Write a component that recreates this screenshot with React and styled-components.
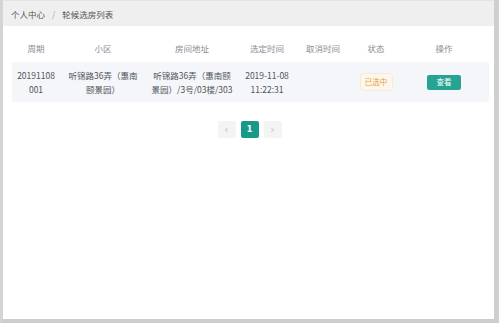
import styled, { createGlobalStyle } from "styled-components";

const GlobalStyle = createGlobalStyle`
  html, body {
    margin: 0;
    padding: 0;
    background: #fff;
  }
  body {
    font-family: "Noto Sans CJK SC", "Noto Sans", sans-serif;
  }
`;

const rows = [
  {
    period: ["20191108", "001"],
    estate: ["听锦路36弄（惠南", "颐景园）"],
    address: ["听锦路36弄（惠南颐", "景园）/3号/03楼/303"],
    chosen: ["2019-11-08", "11:22:31"],
    cancelled: [],
    status: "已选中",
  },
];

const columns = ["周期", "小区", "房间地址", "选定时间", "取消时间", "状态", "操作"];

const App = () => {
  return (
    <>
      <GlobalStyle />
      <Frame>
        <Breadcrumb>
          <span>个人中心</span>
          <Sep>/</Sep>
          <span>轮候选房列表</span>
        </Breadcrumb>
        <Content>
          <Table>
            <HeadRow>
              {columns.map((c) => (
                <HeadCell key={c}>{c}</HeadCell>
              ))}
            </HeadRow>
            {rows.map((r, i) => (
              <BodyRow key={i}>
                <Cell>{r.period.map((l) => <div key={l}>{l}</div>)}</Cell>
                <Cell>{r.estate.map((l) => <div key={l}>{l}</div>)}</Cell>
                <Cell>{r.address.map((l) => <div key={l}>{l}</div>)}</Cell>
                <Cell>{r.chosen.map((l) => <div key={l}>{l}</div>)}</Cell>
                <Cell>{r.cancelled.map((l) => <div key={l}>{l}</div>)}</Cell>
                <Cell>
                  <Tag>{r.status}</Tag>
                </Cell>
                <Cell>
                  <ViewButton>查看</ViewButton>
                </Cell>
              </BodyRow>
            ))}
          </Table>
          <Pager>
            <PageBtn $disabled>‹</PageBtn>
            <PageBtn $active>1</PageBtn>
            <PageBtn $disabled>›</PageBtn>
          </Pager>
        </Content>
      </Frame>
    </>
  );
};

export default App;

const Frame = styled.div`
  box-sizing: border-box;
  width: 499px;
  height: 323px;
  border-left: 3px solid #d4d4d4;
  border-right: 5px solid #cfcfcf;
  border-bottom: 4px solid #cdcdcd;
  background: #fff;
  display: flex;
  flex-direction: column;
`;

const Breadcrumb = styled.div`
  height: 26px;
  background: #efefef;
  border-top: 1px solid #e4e4e4;
  box-sizing: border-box;
  display: flex;
  align-items: center;
  padding-left: 8px;
  font-size: 8.5px;
  color: #555;
`;

const Sep = styled.span`
  margin: 0 7px;
  color: #aaa;
`;

const Content = styled.div`
  padding: 8px 5px 0 9px;
  display: flex;
  flex-direction: column;
`;

const gridCols = "48px 86px 92px 58px 54px 52px 84px";

const Table = styled.div`
  display: flex;
  flex-direction: column;
`;

const HeadRow = styled.div`
  display: grid;
  grid-template-columns: ${gridCols};
  height: 28px;
  align-items: center;
`;

const HeadCell = styled.div`
  text-align: center;
  font-size: 8.5px;
  color: #8a8d93;
`;

const BodyRow = styled.div`
  display: grid;
  grid-template-columns: ${gridCols};
  height: 40px;
  align-items: center;
  background: #f4f6f9;
`;

const Cell = styled.div`
  text-align: center;
  font-size: 8.5px;
  line-height: 14px;
  color: #4f5459;
  display: flex;
  flex-direction: column;
  align-items: center;
`;

const Tag = styled.span`
  box-sizing: border-box;
  width: 33px;
  height: 18px;
  display: inline-flex;
  align-items: center;
  justify-content: center;
  background: #fdf6ec;
  border: 1px solid #f8ead4;
  border-radius: 3px;
  color: #e6a23c;
  font-size: 7.5px;
`;

const ViewButton = styled.span`
  width: 34px;
  height: 15px;
  display: inline-flex;
  align-items: center;
  justify-content: center;
  background: #27a393;
  border-radius: 2px;
  color: #fff;
  font-size: 7.5px;
`;

const Pager = styled.div`
  display: flex;
  justify-content: center;
  gap: 5px;
  margin-top: 19px;
  padding-right: 2px;
`;

const PageBtn = styled.span`
  width: 18px;
  height: 17px;
  display: inline-flex;
  align-items: center;
  justify-content: center;
  border-radius: 2px;
  font-family: "DejaVu Sans", sans-serif;
  font-size: ${(p) => (p.$active ? "8px" : "11px")};
  font-weight: ${(p) => (p.$active ? "bold" : "normal")};
  background: ${(p) => (p.$active ? "#17998a" : "#f4f4f5")};
  color: ${(p) => (p.$active ? "#fff" : "#c0c4cc")};
`;
